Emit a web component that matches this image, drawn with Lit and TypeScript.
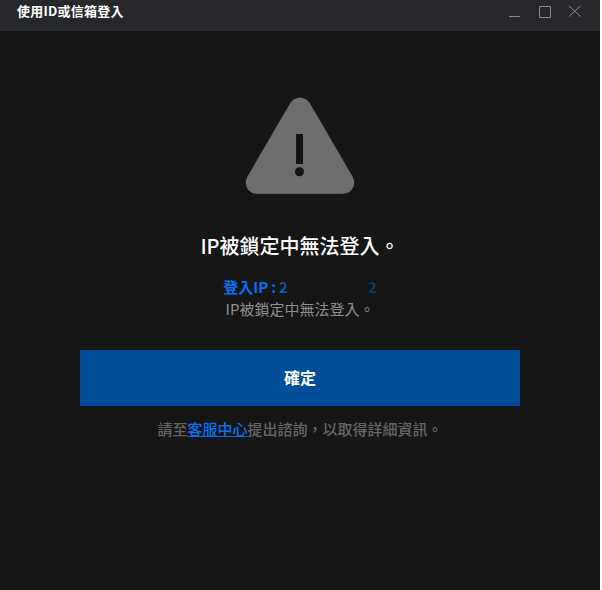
import { LitElement, html, css } from "lit";
import { customElement } from "lit/decorators.js";

@customElement("app-root")
export class AppRoot extends LitElement {
  static styles = css`
    :host {
      display: block;
      width: 602px;
      height: 590px;
      background: #fff;
      overflow: hidden;
      font-family: "Noto Sans CJK TC", "Noto Sans", sans-serif;
    }
    .window {
      width: 600px;
      height: 590px;
      background: #161616;
      display: flex;
      flex-direction: column;
    }
    .titlebar {
      height: 31px;
      flex: none;
      background: #26282b;
      display: flex;
      align-items: center;
      justify-content: space-between;
    }
    .title {
      margin-left: 17px;
      margin-bottom: 9px;
      font-size: 13px;
      line-height: 20px;
      font-weight: 700;
      letter-spacing: 0.25px;
      color: #fff;
    }
    .controls {
      display: flex;
      margin-right: 19px;
      margin-bottom: 7px;
      gap: 16px;
    }
    .controls svg {
      width: 14px;
      height: 14px;
      display: block;
      fill: none;
      stroke: #8a8a8a;
      stroke-width: 1;
    }
    .body {
      flex: 1;
      display: flex;
      flex-direction: column;
      align-items: center;
    }
    .alert {
      width: 110px;
      height: 98px;
      margin-top: 66px;
      display: block;
    }
    h1 {
      margin: 38px 0 0;
      font-size: 20px;
      line-height: 26px;
      font-weight: 500;
      color: #fff;
    }
    .ip {
      margin-top: 17px;
      height: 22px;
      display: flex;
      font-size: 15px;
      line-height: 22px;
      font-weight: 700;
      word-spacing: -0.5px;
      color: #0a70f5;
    }
    .gap {
      width: 80px;
    }
    .dim {
      color: transparent;
      background: linear-gradient(90deg, #0c2f57, #104a8c);
      -webkit-background-clip: text;
      background-clip: text;
    }
    .fade {
      color: transparent;
      background: linear-gradient(90deg, #0a70f5, #0b3f7c);
      -webkit-background-clip: text;
      background-clip: text;
    }
    .sub {
      font-size: 15px;
      line-height: 22px;
      color: #8f8f8f;
    }
    .confirm {
      margin-top: 30px;
      width: 440px;
      height: 56px;
      padding: 0 0 2px;
      border: 0;
      background: #004e99;
      color: #fff;
      font: inherit;
      font-size: 16px;
      font-weight: 700;
    }
    .help {
      margin-top: 12px;
      font-size: 15px;
      line-height: 22px;
      font-weight: 500;
      color: #666;
    }
    .help a {
      color: #0a70f5;
      text-decoration: underline;
    }
  `;

  render() {
    return html`
      <div class="window">
        <div class="titlebar">
          <div class="title">使用ID或信箱登入</div>
          <div class="controls">
            <svg viewBox="0 0 14 14"><path d="M2 11.5H13" /></svg>
            <svg viewBox="0 0 14 14"><path d="M2.5 1.5H13.5V12.5H2.5Z" /></svg>
            <svg viewBox="0 0 14 14"><path d="M2 1L13.5 11.5M13.5 1L2 11.5" /></svg>
          </div>
        </div>
        <div class="body">
          <svg class="alert" viewBox="0 0 110 98">
            <path
              fill="#6e6e6e"
              d="M45 6.5C49.5 -1.5 60.5 -1.5 65 6.5L107.5 79.5C112 87.5 107 96.8 98 96.8H12C3 96.8 -2 87.5 2.5 79.5Z"
            />
            <rect x="51" y="37" width="7" height="30" fill="#161616" />
            <circle cx="54.5" cy="74.7" r="4.5" fill="#161616" />
          </svg>
          <h1>IP被鎖定中無法登入。</h1>
          <div class="ip">
            <span>登入IP : <span class="fade">2</span></span>
            <span class="gap"></span>
            <span class="dim">2</span>
          </div>
          <div class="sub">IP被鎖定中無法登入。</div>
          <button class="confirm">確定</button>
          <div class="help">請至<a href="#">客服中心</a>提出諮詢，以取得詳細資訊。</div>
        </div>
      </div>
    `;
  }
}
